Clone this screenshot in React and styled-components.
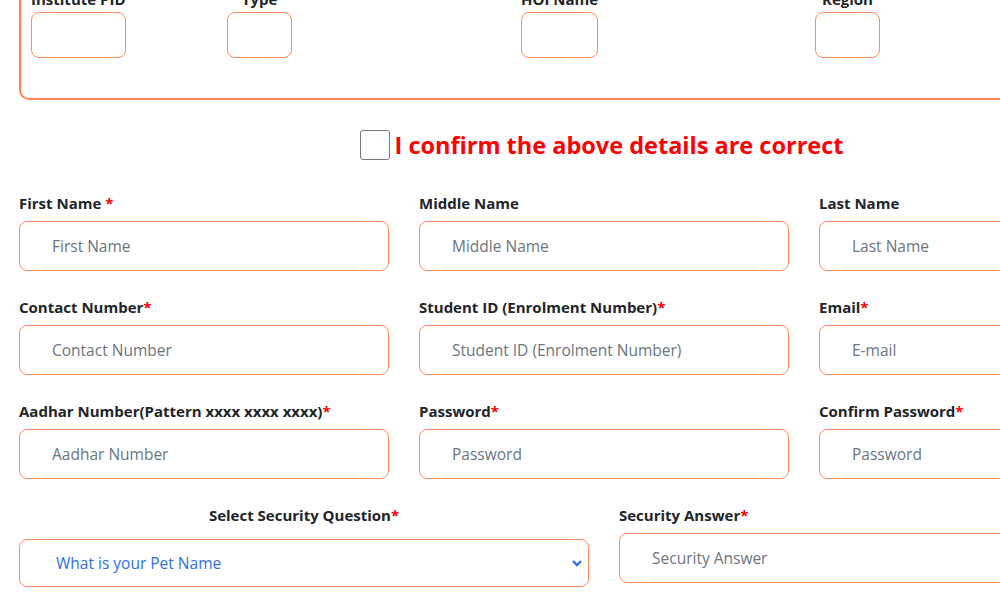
import React from 'react'
import styled, { createGlobalStyle } from 'styled-components'

const GlobalStyle = createGlobalStyle`
  * {
    margin: 0;
    padding: 0;
    box-sizing: border-box;
  }
  body {
    font-family: "Open Sans", "Noto Sans", sans-serif;
    background: #ffffff;
    color: #212529;
    overflow: hidden;
  }
`

const accent = '#ff8a5c'

const Page = styled.div`
  width: 1203px;
  padding-left: 19px;
  margin-top: -36px;
`

const InstituteBox = styled.div`
  border: 2px solid #ff8357;
  border-radius: 10px;
  padding: 22px 10px 40px;
  display: grid;
  grid-template-columns: 196px 294px 294px 294px;
`

const Cell = styled.div`
  display: inline-flex;
  flex-direction: column;
  justify-self: start;
  min-width: 65px;
`

const TopLabel = styled.label`
  font-size: 15px;
  font-weight: 700;
  text-align: center;
  line-height: 22px;
  margin-bottom: 2px;
`

const SmallBox = styled.div`
  height: 46px;
  border: 1px solid ${accent};
  border-radius: 8px;
`

const ConfirmRow = styled.div`
  display: flex;
  justify-content: center;
  align-items: center;
  gap: 5px;
  margin: 29px 0 31px -19px;
`

const Check = styled.span`
  width: 30px;
  height: 30px;
  border: 1px solid #767676;
  border-radius: 3px;
  background: #fff;
`

const ConfirmText = styled.span`
  color: #ff0000;
  font-weight: 700;
  font-size: 23.5px;
`

const FormGrid = styled.div`
  display: grid;
  grid-template-columns: repeat(${p => p.$cols}, ${p => p.$w}px);
  column-gap: 30px;
  row-gap: 25px;
  margin-bottom: 25px;
`

const Field = styled.div`
  display: flex;
  flex-direction: column;
`

const Label = styled.label`
  font-size: 15px;
  font-weight: 700;
  line-height: 22px;
  margin-bottom: ${p => p.$gap || 7}px;
  text-align: ${p => (p.$center ? 'center' : 'left')};
  color: #212529;
`

const Req = styled.span`
  color: #ff0000;
`

const Input = styled.input`
  height: 50px;
  width: 100%;
  border: 1px solid ${accent};
  border-radius: 8px;
  padding: 0 32px;
  font-family: "Open Sans", "Noto Sans", sans-serif;
  font-size: 15.5px;
  color: #212529;
  outline: none;
  &::placeholder {
    color: #6c757d;
  }
`

const SelectWrap = styled.div`
  position: relative;
`

const Select = styled.select`
  appearance: none;
  width: 100%;
  height: 48px;
  border: 1px solid ${accent};
  border-radius: 8px;
  padding: 0 36px;
  font-family: "Open Sans", "Noto Sans", sans-serif;
  font-size: 15.5px;
  color: #2f6ee8;
  background: #fff;
  outline: none;
`

const Chevron = styled.svg`
  position: absolute;
  right: 6px;
  top: 19px;
  pointer-events: none;
`

function F({ label, req, star, placeholder }) {
  return (
    <Field>
      <Label>
        {label}
        {req && <Req>{star ? ' *' : '*'}</Req>}
      </Label>
      <Input placeholder={placeholder} />
    </Field>
  )
}

export default function App() {
  return (
    <>
      <GlobalStyle />
      <Page>
        <InstituteBox>
          <Cell>
            <TopLabel>Institute PID</TopLabel>
            <SmallBox />
          </Cell>
          <Cell>
            <TopLabel>Type</TopLabel>
            <SmallBox />
          </Cell>
          <Cell>
            <TopLabel>HOI Name</TopLabel>
            <SmallBox />
          </Cell>
          <Cell>
            <TopLabel>Region</TopLabel>
            <SmallBox />
          </Cell>
        </InstituteBox>

        <ConfirmRow>
          <Check />
          <ConfirmText>I confirm the above details are correct</ConfirmText>
        </ConfirmRow>

        <FormGrid $cols={3} $w={370}>
          <F label="First Name" req star placeholder="First Name" />
          <F label="Middle Name" placeholder="Middle Name" />
          <F label="Last Name" placeholder="Last Name" />
          <F label="Contact Number" req placeholder="Contact Number" />
          <F label="Student ID (Enrolment Number)" req placeholder="Student ID (Enrolment Number)" />
          <F label="Email" req placeholder="E-mail" />
          <F label="Aadhar Number(Pattern xxxx xxxx xxxx)" req placeholder="Aadhar Number" />
          <F label="Password" req placeholder="Password" />
          <F label="Confirm Password" req placeholder="Password" />
        </FormGrid>

        <FormGrid $cols={2} $w={570}>
          <Field>
            <Label $center $gap={13}>
              Select Security Question<Req>*</Req>
            </Label>
            <SelectWrap>
              <Select defaultValue="pet">
                <option value="pet">What is your Pet Name</option>
              </Select>
              <Chevron width="12" height="10" viewBox="0 0 12 10">
                <path d="M2 3 L6 7 L10 3" fill="none" stroke="#2f6ee8" strokeWidth="2.4" />
              </Chevron>
            </SelectWrap>
          </Field>
          <F label="Security Answer" req placeholder="Security Answer" />
        </FormGrid>
      </Page>
    </>
  )
}
